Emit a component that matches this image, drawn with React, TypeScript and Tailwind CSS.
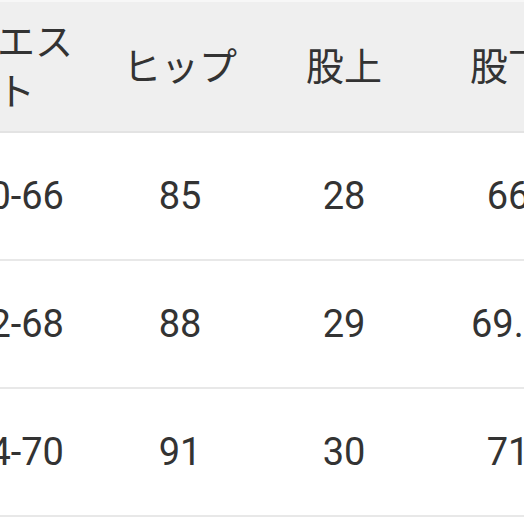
const headers = ['ウエスト', 'ヒップ', '股上', '股下']

const rows = [
  ['60-66', '85', '28', '66'],
  ['62-68', '88', '29', '69.5'],
  ['64-70', '91', '30', '71'],
]

export default function App() {
  return (
    <div
      className="h-[524px] w-[524px] overflow-hidden bg-white text-[#333333]"
      style={{ fontFamily: 'Roboto, "Noto Sans CJK JP", sans-serif' }}
    >
      <table className="ml-[-66px] w-[656px] table-fixed border-collapse">
        <thead>
          <tr className="h-[131px] border-t-2 border-b-2 border-t-[#f7f7f7] border-b-[#e3e3e3] bg-[#efefef]">
            {headers.map((h) => (
              <th
                key={h}
                className="w-[164px] px-[16px] text-center text-[38px] font-normal leading-[50px]"
              >
                {h}
              </th>
            ))}
          </tr>
        </thead>
        <tbody>
          {rows.map((r) => (
            <tr key={r[0]} className="h-[128px] border-b-2 border-[#e8e8e8]">
              {r.map((c, i) => (
                <td key={i} className="px-[16px] text-center text-[38px] leading-none">
                  {c}
                </td>
              ))}
            </tr>
          ))}
        </tbody>
      </table>
    </div>
  )
}
